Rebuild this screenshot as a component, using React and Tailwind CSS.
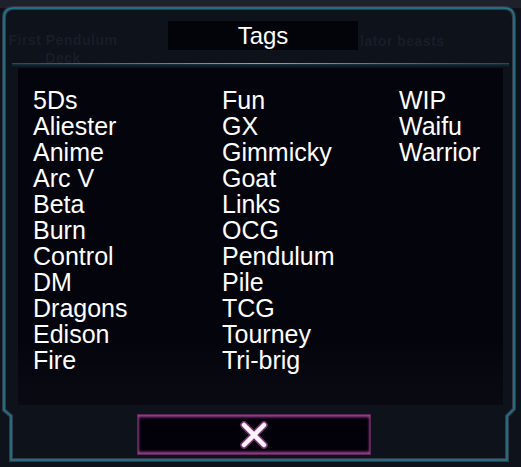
const columns = [
  ['5Ds', 'Aliester', 'Anime', 'Arc V', 'Beta', 'Burn', 'Control', 'DM', 'Dragons', 'Edison', 'Fire'],
  ['Fun', 'GX', 'Gimmicky', 'Goat', 'Links', 'OCG', 'Pendulum', 'Pile', 'TCG', 'Tourney', 'Tri-brig'],
  ['WIP', 'Waifu', 'Warrior'],
];

function Frame() {
  const d = 'M4 410 L4 18 Q4 8 14 8 L504 8 Q514 8 514 18 L514 409 L507 416 L507 460 L11 460 L11 416 Z';
  return (
    <svg className="absolute inset-0 pointer-events-none" width="521" height="467" viewBox="0 0 521 467">
      <path d={d} fill="none" stroke="#343a48" strokeWidth="4" />
      <path d={d} fill="none" stroke="#1c7d8f" strokeWidth="1.5" />
    </svg>
  );
}

function CloseIcon() {
  return (
    <svg width="28" height="28" viewBox="0 0 28 28">
      <g stroke="#c84fb8" strokeWidth="7.5" strokeLinecap="round" opacity="0.6">
        <path d="M4 4 L24 24 M24 4 L4 24" />
      </g>
      <g stroke="#fff4fd" strokeWidth="4.5" strokeLinecap="round">
        <path d="M4 4 L24 24 M24 4 L4 24" />
      </g>
    </svg>
  );
}

export default function App() {
  return (
    <div className="relative w-[521px] h-[467px] overflow-hidden bg-[#0e121b] font-['Liberation_Sans',Arial,sans-serif]">
      <div className="h-2 bg-[#1e212b]" />
      <Frame />
      <div className="relative px-[18px]">
        <div className="relative h-[55px]">
          <span className="absolute left-[-14px] top-[23px] w-[118px] text-center text-[14px] font-bold tracking-[0.5px] leading-[18px] text-[#181d29]">
            First Pendulum<br />Deck
          </span>
          <span className="absolute left-[342px] top-[23px] text-[14px] font-bold tracking-[0.5px] text-[#181d29]">
            lator beasts
          </span>
          <div className="absolute left-[150px] top-[13px] w-[190px] h-[29px] bg-[#03030a] flex items-center justify-center">
            <span className="text-[24px] text-white leading-none">Tags</span>
          </div>
        </div>
        <div className="relative -mx-[6px]">
          <div className="h-px bg-gradient-to-r from-[#1a4f5a] via-[#4dbfc7] to-[#1a4f5a]" />
          <div className="h-[3px] bg-gradient-to-b from-[#15333d] to-transparent" />
        </div>
        <div className="mt-px h-[337px] bg-gradient-to-b from-[#04040c] from-80% to-[#0a0b12] pl-[15px] pt-[19px]">
          <div className="grid grid-cols-[189px_177px_1fr]">
            {columns.map((col, i) => (
              <div key={i} className="flex flex-col">
                {col.map((tag) => (
                  <span key={tag} className="text-[25px] leading-[26px] text-white">
                    {tag}
                  </span>
                ))}
              </div>
            ))}
          </div>
        </div>
      </div>
      <div className="relative flex justify-center pr-[13px] mt-[9px]">
        <button className="w-[234px] h-[41px] flex items-center justify-center bg-[#020008] border border-[#5e2558] shadow-[inset_0_2px_3px_#a8449c,inset_0_-2px_3px_#a8449c]">
          <CloseIcon />
        </button>
      </div>
    </div>
  );
}
